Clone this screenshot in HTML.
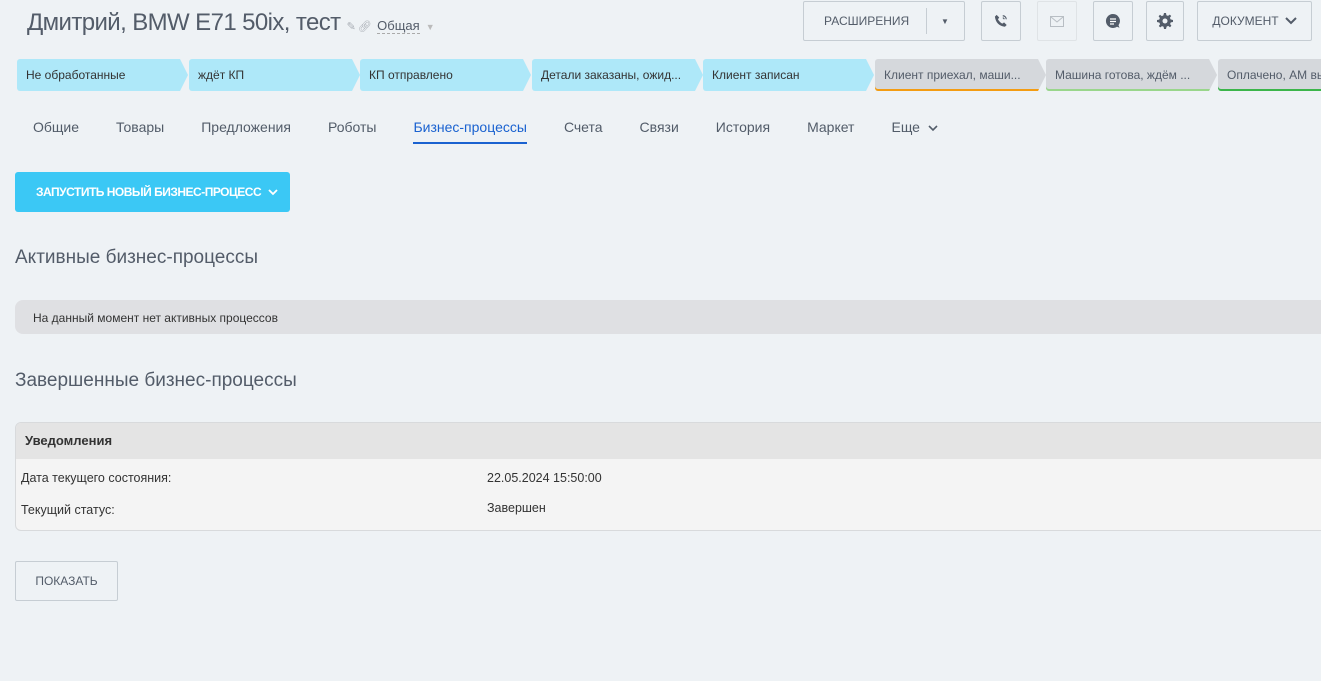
<!DOCTYPE html>
<html><head><meta charset="utf-8"><style>
*{box-sizing:border-box;margin:0;padding:0}
body{width:1321px;height:681px;overflow:hidden;background:#eef2f5;font-family:"Liberation Sans",sans-serif;color:#333;position:relative}
.abs{position:absolute}
.title{left:27px;top:9px;font-size:24px;color:#535c69;font-weight:300;white-space:nowrap;letter-spacing:-0.6px}
.btn{position:absolute;top:1px;height:40px;border:1px solid #c6cdd3;border-radius:2px;background:#eef2f5;display:flex;align-items:center;justify-content:center;font-size:12px;color:#535c69}
.stage{position:absolute;top:59px;height:32px;width:176px;font-size:12px;color:#333;padding:9px 0 0 9px;white-space:nowrap;clip-path:polygon(0 0,163px 0,171px 50%,163px 100%,0 100%);border-radius:3px 0 0 3px}
.blue{background:#aee8f9}
.grey{background:#d5d8dc;color:#535c69}
.tabs{top:119px;left:33px;font-size:14px;color:#525c69;display:flex}
.tabs span{margin-right:37px;white-space:nowrap}
</style></head><body>
<div class="abs title">Дмитрий, BMW E71 50ix, тест <span style="font-size:11px;color:#a8adb4">✎ 🔗︎</span> <span style="font-size:13px;color:#535c69;border-bottom:1px dashed #aaa;letter-spacing:0">Общая</span> <span style="font-size:9px;color:#bbb">▼</span></div>

<div class="btn" style="left:803px;width:162px;justify-content:flex-start"><span style="padding-left:20px;width:122px">РАСШИРЕНИЯ</span><span style="border-left:1px solid #c6cdd3;height:26px;width:1px"></span><span style="font-size:8px;margin-left:14px">▼</span></div>
<div class="btn" style="left:981px;width:40px"><svg width="14" height="14" viewBox="0 0 16 16"><path d="M3 1l3 3-1.5 2c1 2 3 4 5 5l2-1.5 3 3-2 2C6 14 2 10 1 3z" fill="#535c69"/><path d="M10 2a4 4 0 0 1 4 4M10 4.5a1.5 1.5 0 0 1 1.5 1.5" stroke="#535c69" fill="none" stroke-width="1.3"/></svg></div>
<div class="btn" style="left:1037px;width:40px;border-color:#dfe3e6"><svg width="14" height="11" viewBox="0 0 14 11"><rect x=".5" y=".5" width="13" height="10" fill="none" stroke="#b8bec4"/><path d="M1 1l6 5 6-5" fill="none" stroke="#b8bec4"/></svg></div>
<div class="btn" style="left:1093px;width:40px"><svg width="16" height="16" viewBox="0 0 16 16"><path d="M8 1a7 7 0 1 0 4 12.7l2.5 1-1-2.5A7 7 0 0 0 8 1z" fill="#535c69"/><path d="M5 6h6M5 8.5h6M5 11h4" stroke="#fff" stroke-width="1.2"/></svg></div>
<div class="btn" style="left:1146px;width:38px"><svg width="16" height="16" viewBox="0 0 16 16"><path d="M7 0h2l.4 2.2 1.6.7 1.8-1.3 1.4 1.4-1.3 1.8.7 1.6L16 7v2l-2.2.4-.7 1.6 1.3 1.8-1.4 1.4-1.8-1.3-1.6.7L9 16H7l-.4-2.2-1.6-.7-1.8 1.300-1.4-1.4 1.3-1.8-.7-1.6L0 9V7l2.2-.4.7-1.6-1.3-1.8 1.4-1.4 1.8 1.3 1.6-.7z" fill="#535c69"/><circle cx="8" cy="8" r="2.5" fill="#eef2f5"/></svg></div>
<div class="btn" style="left:1197px;width:115px">ДОКУМЕНТ <svg width="12" height="8" viewBox="0 0 12 8" style="margin-left:6px"><path d="M1 1l5 5 5-5" stroke="#535c69" stroke-width="2" fill="none"/></svg></div>

<div class="stage blue" style="left:17px">Не обработанные</div>
<div class="stage blue" style="left:189px">ждёт КП</div>
<div class="stage blue" style="left:360px">КП отправлено</div>
<div class="stage blue" style="left:532px">Детали заказаны, ожид...</div>
<div class="stage blue" style="left:703px">Клиент записан</div>
<div class="stage grey" style="left:875px;box-shadow:inset 0 -2px #f39c12">Клиент приехал, маши...</div>
<div class="stage grey" style="left:1046px;box-shadow:inset 0 -2px #99d68b">Машина готова, ждём ...</div>
<div class="stage grey" style="left:1218px;box-shadow:inset 0 -2px #3bb54a">Оплачено, АМ вы</div>

<div class="abs tabs"><span>Общие</span><span>Товары</span><span>Предложения</span><span>Роботы</span><span style="color:#1a62d0;position:relative">Бизнес-процессы<i style="position:absolute;left:0;right:0;top:23px;height:2px;background:#1a62d0"></i></span><span>Счета</span><span>Связи</span><span>История</span><span>Маркет</span><span>Еще <svg width="10" height="7" viewBox="0 0 10 7" style="margin-left:4px"><path d="M1 1l4 4 4-4" stroke="#525c69" stroke-width="1.6" fill="none"/></svg></span></div>

<div class="abs" style="left:15px;top:172px;width:275px;height:40px;background:#3bc8f5;border-radius:3px;color:#fff;font-size:12px;font-weight:bold;display:flex;align-items:center;padding-left:21px;letter-spacing:-0.5px">ЗАПУСТИТЬ НОВЫЙ БИЗНЕС-ПРОЦЕСС <svg width="10" height="7" viewBox="0 0 10 7" style="margin-left:7px"><path d="M1 1l4 4 4-4" stroke="#fff" stroke-width="1.8" fill="none"/></svg></div>

<div class="abs" style="left:15px;top:247px;font-size:19px;color:#535c69;font-weight:300">Активные бизнес-процессы</div>
<div class="abs" style="left:15px;top:300px;width:1320px;height:34px;background:#dfe0e3;border-radius:8px 0 0 8px;font-size:12px;padding:11px 0 0 18px;color:#333">На данный момент нет активных процессов</div>

<div class="abs" style="left:15px;top:370px;font-size:19px;color:#535c69;font-weight:300">Завершенные бизнес-процессы</div>
<div class="abs" style="left:15px;top:422px;width:1320px;height:109px;background:#f4f4f4;border:1px solid #d8dadc;border-radius:6px 0 0 6px;overflow:hidden">
<div style="height:36px;background:#e4e4e4;font-size:13px;font-weight:bold;padding:10px 0 0 9px">Уведомления</div>
<div style="position:absolute;top:48px;left:5px;font-size:12.5px">Дата текущего состояния:</div>
<div style="position:absolute;top:48px;left:471px;font-size:12.5px">22.05.2024 15:50:00</div>
<div style="position:absolute;top:80px;left:5px;font-size:12.5px">Текущий статус:</div>
<div style="position:absolute;top:78px;left:471px;font-size:12.5px">Завершен</div>
</div>
<div class="abs" style="left:15px;top:561px;width:103px;height:40px;border:1px solid #c6cdd3;border-radius:2px;font-size:12px;color:#535c69;display:flex;align-items:center;justify-content:center">ПОКАЗАТЬ</div>
</body></html>
